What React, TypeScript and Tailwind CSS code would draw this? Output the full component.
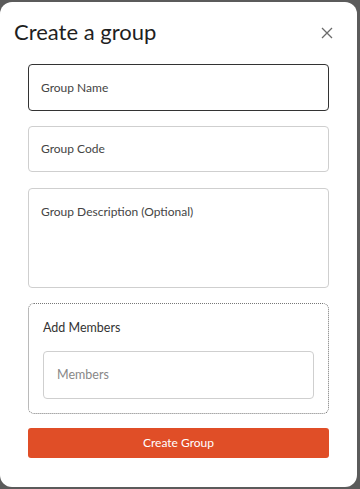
import React from "react";

export default function App() {
  return (
    <div className="w-[360px] h-[489px] bg-[#5b5b5b] overflow-hidden pt-[2px]" style={{ fontFamily: "Lato, 'Noto Sans', sans-serif" }}>
      <div className="w-[357px] h-[485px] bg-white rounded-[12px] relative">
        <div className="flex items-center justify-between pl-[14px] pr-[24px] pt-[14px] h-[46px]">
          <h1 className="text-[22px] leading-[28px] text-[#1f1f1f] font-normal">Create a group</h1>
          <svg width="12" height="12" viewBox="0 0 12 12" className="mt-[2px]">
            <path d="M1 1 L11 11 M11 1 L1 11" stroke="#6b6b6b" strokeWidth="1.3" />
          </svg>
        </div>
        <div className="mx-[28px] mt-[16px] flex flex-col">
          <div className="h-[47px] border border-[#333] rounded-[4px] flex items-center pl-[12px] text-[12px] text-[#444]">
            Group Name
          </div>
          <div className="h-[46px] mt-[15px] border border-[#cfcfcf] rounded-[4px] flex items-center pl-[12px] text-[12px] text-[#444]">
            Group Code
          </div>
          <div className="h-[100px] mt-[16px] border border-[#cfcfcf] rounded-[4px] pl-[12px] pt-[15px] text-[12px] leading-[16px] text-[#444]">
            Group Description (Optional)
          </div>
          <div className="h-[111px] mt-[15px] border border-dotted border-[#777] rounded-[6px] px-[14px] pt-[16px]">
            <div className="text-[12.5px] leading-[16px] text-[#333]">Add Members</div>
            <div className="h-[48px] mt-[15px] border border-[#cfcfcf] rounded-[4px] flex items-center pl-[13px] text-[12.5px] text-[#888]">
              Members
            </div>
          </div>
          <button className="h-[30px] mt-[14px] bg-[#e04e27] rounded-[3px] text-white text-[12px] flex items-center justify-center">
            Create Group
          </button>
        </div>
      </div>
    </div>
  );
}
